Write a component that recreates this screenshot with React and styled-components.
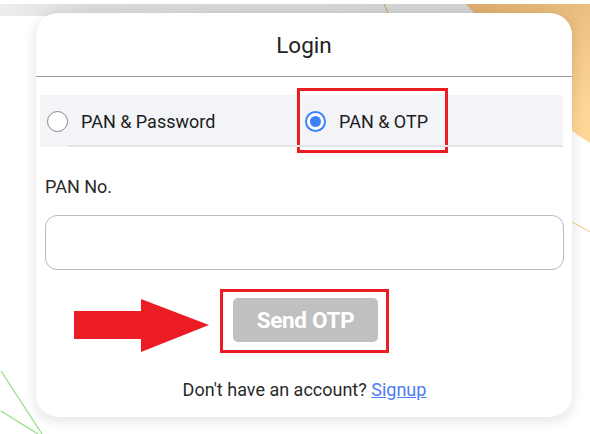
import React from "react";
import styled, { createGlobalStyle } from "styled-components";

const Global = createGlobalStyle`
  html, body { margin: 0; padding: 0; background: #fff; }
  body { font-family: Roboto, "Noto Sans", Arial, sans-serif; }
  * { box-sizing: border-box; }
`;

const Page = styled.div`
  position: relative;
  width: 590px;
  height: 434px;
  overflow: hidden;
  padding: 13px 0 0 36px;
`;

const Backdrop = styled.svg`
  position: absolute;
  left: 0;
  top: 0;
  width: 590px;
  height: 434px;
  z-index: 0;
`;

const Card = styled.div`
  position: relative;
  z-index: 1;
  width: 536px;
  height: 404px;
  background: #fff;
  border-radius: 22px;
  box-shadow: 0 3px 14px rgba(0, 0, 0, 0.13);
  display: flex;
  flex-direction: column;
`;

const Header = styled.div`
  height: 64px;
  display: flex;
  align-items: center;
  justify-content: center;
  font-size: 22.5px;
  color: #222;
  border-bottom: 1px solid #9c9c9c;
  padding-top: 1px;
`;

const RadioRow = styled.div`
  position: relative;
  margin: 18px 9px 0 4px;
  height: 52px;
  background: #f3f4f8;
  display: grid;
  grid-template-columns: 261px 1fr;
  align-items: center;
  &::after {
    content: "";
    position: absolute;
    left: 27px;
    right: 0;
    bottom: 0;
    height: 2px;
    background: #e3e4e8;
  }
`;

const Option = styled.label`
  position: relative;
  display: flex;
  align-items: center;
  gap: 13px;
  padding-left: ${(p) => p.$pad}px;
  font-size: 18px;
  color: #1c1c1c;
  height: 100%;
`;

const Circle = styled.span`
  width: 21px;
  height: 21px;
  border-radius: 50%;
  border: ${(p) => (p.$checked ? "2px solid #3b82f6" : "1.5px solid #858585")};
  background: #fff;
  display: flex;
  align-items: center;
  justify-content: center;
  &::after {
    content: "";
    display: ${(p) => (p.$checked ? "block" : "none")};
    width: 11px;
    height: 11px;
    border-radius: 50%;
    background: #3b82f6;
  }
`;

const Highlight = styled.span`
  position: absolute;
  left: -4px;
  top: -7px;
  width: 151px;
  height: 65px;
  border: 3px solid #ec1c24;
  pointer-events: none;
`;

const Label = styled.div`
  margin: 29px 0 0 9px;
  font-size: 18px;
  line-height: 22px;
  color: #2a2a2a;
`;

const Input = styled.input`
  margin: 17px 0 0 9px;
  width: 519px;
  height: 55px;
  border: 1px solid #b9b9b9;
  border-radius: 12px;
  outline: none;
  background: #fff;
`;

const ButtonRow = styled.div`
  margin-top: 19px;
  display: flex;
  justify-content: center;
`;

const ButtonFrame = styled.div`
  position: relative;
  width: 169px;
  height: 64px;
  border: 3px solid #ec1c24;
  padding: 6px 8px 8px 10px;
  margin-left: 1px;
`;

const SendButton = styled.button`
  width: 145px;
  height: 44px;
  border: none;
  border-radius: 5px;
  background: #c0c0c0;
  color: #fff;
  font-family: Roboto, Arial, sans-serif;
  font-weight: 700;
  font-size: 22.5px;
  letter-spacing: -0.3px;
  padding: 0;
`;

const Arrow = styled.svg`
  position: absolute;
  left: -151px;
  top: 6px;
  width: 141px;
  height: 56px;
`;

const Footer = styled.div`
  margin-top: 26px;
  text-align: center;
  font-size: 18px;
  line-height: 22px;
  color: #2a2a2a;
  padding-left: 1px;
`;

const Link = styled.a`
  color: #4a7cf6;
  text-decoration: underline;
`;

export default function App() {
  return (
    <>
      <Global />
      <Page>
        <Backdrop viewBox="0 0 590 434">
          <defs>
            <linearGradient id="band" x1="0" x2="1" y1="0" y2="0">
              <stop offset="0" stopColor="#eeeeee" />
              <stop offset="0.2" stopColor="#dadada" />
              <stop offset="1" stopColor="#d2d2d2" />
            </linearGradient>
            <linearGradient id="orange" x1="0" x2="0.6" y1="0" y2="1">
              <stop offset="0" stopColor="#dcab6d" />
              <stop offset="1" stopColor="#fed796" />
            </linearGradient>
          </defs>
          <rect x="0" y="4" width="480" height="12" fill="url(#band)" />
          <path d="M466 4 L590 4 L590 143 C565 128 540 105 520 75 C500 45 485 25 466 4 Z" fill="url(#orange)" />
          <line x1="384" y1="4" x2="388" y2="13" stroke="#c89a5a" strokeWidth="1" />
          <line x1="572" y1="222" x2="590" y2="232" stroke="#f6c383" strokeWidth="1" />
          <line x1="1" y1="371" x2="42" y2="434" stroke="#8ee07a" strokeWidth="1.2" />
          <line x1="1" y1="411" x2="38" y2="434" stroke="#8ee07a" strokeWidth="1.2" />
        </Backdrop>
        <Card>
          <Header>Login</Header>
          <RadioRow>
            <Option $pad={7}>
              <Circle />
              PAN &amp; Password
            </Option>
            <Option $pad={4}>
              <Highlight />
              <Circle $checked />
              PAN &amp; OTP
            </Option>
          </RadioRow>
          <Label>PAN No.</Label>
          <Input type="text" />
          <ButtonRow>
            <ButtonFrame>
              <Arrow viewBox="0 0 141 56">
                <path d="M2 13 L69 13 L69 1 L137 27 L69 54 L69 41 L2 41 Z" fill="#ec1c24" />
              </Arrow>
              <SendButton>Send OTP</SendButton>
            </ButtonFrame>
          </ButtonRow>
          <Footer>
            Don't have an account? <Link href="#">Signup</Link>
          </Footer>
        </Card>
      </Page>
    </>
  );
}
